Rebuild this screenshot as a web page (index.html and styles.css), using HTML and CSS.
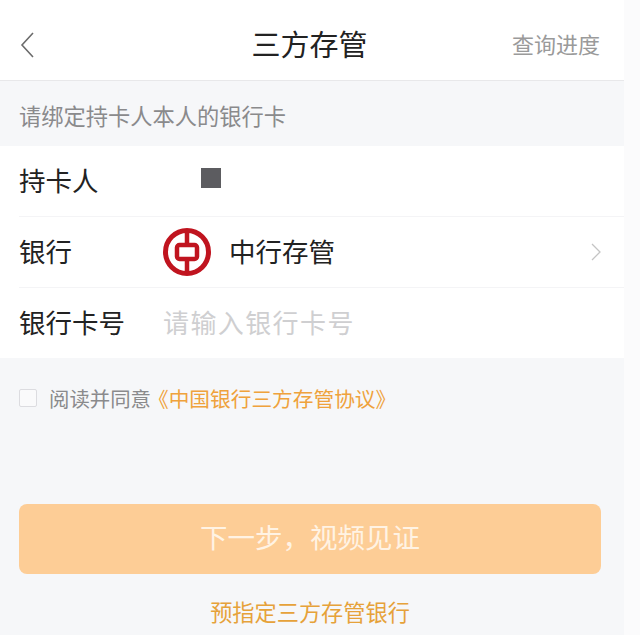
FILE: index.html
```html
<!DOCTYPE html>
<html lang="zh-CN">
<head>
    <meta charset="UTF-8">
    <title>三方存管</title>
    <link rel="stylesheet" href="styles.css">
</head>
<body>
    <div class="page">
        <header class="nav-bar">
            <svg class="back-icon" width="16" height="28" viewBox="0 0 16 28">
                <path d="M14 2 L3 14 L14 26" fill="none" stroke="#6b6b6b" stroke-width="1.6"/>
            </svg>
            <h1 class="nav-title">三方存管</h1>
            <span class="nav-link">查询进度</span>
        </header>

        <p class="hint">请绑定持卡人本人的银行卡</p>

        <div class="form">
            <div class="form-row">
                <span class="form-label">持卡人</span>
                <span class="name-mask"></span>
            </div>
            <div class="form-row">
                <span class="form-label">银行</span>
                <svg class="bank-logo" width="48" height="48" viewBox="0 0 48 48">
                    <circle cx="24" cy="24" r="21.5" fill="none" stroke="#c0141f" stroke-width="5"/>
                    <path d="M24 3 V16 M24 32 V45" stroke="#c0141f" stroke-width="4.5"/>
                    <rect x="14" y="17" width="20" height="14" rx="2.5" fill="none" stroke="#c0141f" stroke-width="4.5"/>
                </svg>
                <span class="bank-name">中行存管</span>
                <svg class="row-arrow" width="10" height="18" viewBox="0 0 10 18">
                    <path d="M1 1 L9 9 L1 17" fill="none" stroke="#c4c4c4" stroke-width="1.3"/>
                </svg>
            </div>
            <div class="form-row">
                <span class="form-label">银行卡号</span>
                <span class="placeholder">请输入银行卡号</span>
            </div>
        </div>

        <div class="agree">
            <span class="checkbox"></span>
            <span class="agree-text">阅读并同意</span>
            <span class="agree-link">《中国银行三方存管协议》</span>
        </div>

        <button class="next-btn">下一步，视频见证</button>
        <div class="pre-assign">预指定三方存管银行</div>
    </div>
</body>
</html>
```

FILE: styles.css
```css
body {
    margin: 0;
    background-color: #fbfbfc;
    font-family: "Noto Sans CJK SC", "Noto Sans", sans-serif;
    color: #222;
}

.page {
    width: 624px;
    height: 635px;
    background-color: #f6f7f9;
    overflow: hidden;
}

/* Top bar */
.nav-bar {
    height: 81px;
    box-sizing: border-box;
    padding: 6px 24px 0 19px;
    display: grid;
    grid-template-columns: 1fr auto 1fr;
    align-items: center;
    background: #fff;
    border-bottom: 1px solid #e8e8ea;
}

.back-icon {
    margin-top: 4px;
}

.nav-title {
    margin: 0;
    font-size: 29px;
    font-weight: 400;
    color: #222;
}

.nav-link {
    justify-self: end;
    font-size: 22px;
    color: #9a9a9a;
}

.hint {
    margin: 0;
    height: 65px;
    box-sizing: border-box;
    padding: 3px 0 0 19px;
    display: flex;
    align-items: center;
    font-size: 22.25px;
    color: #8a8a8c;
    line-height: 1;
}

/* Form rows */
.form {
    background: #fff;
    padding-left: 19px;
}

.form-row {
    height: 70px;
    display: flex;
    align-items: center;
    border-bottom: 1px solid #f4f4f6;
}

.form-row:last-child {
    border-bottom: none;
}

.form-label {
    width: 144px;
    margin-bottom: 4px;
    font-size: 26.5px;
    color: #222;
}

.name-mask {
    width: 20px;
    height: 20px;
    margin: -6px 0 0 38px;
    background: #5c5c60;
}

.bank-logo {
    flex-shrink: 0;
}

.bank-name {
    margin: 0 0 4px 18px;
    font-size: 26.5px;
    color: #222;
}

.row-arrow {
    margin-left: auto;
    margin-right: 23px;
}

.placeholder {
    margin-bottom: 4px;
    font-size: 26px;
    letter-spacing: 1.4px;
    color: #cfcfd1;
}

/* Agreement */
.agree {
    height: 80px;
    padding-left: 19px;
    display: flex;
    align-items: center;
}

.checkbox {
    width: 16px;
    height: 16px;
    border: 1px solid #dcdce0;
    border-radius: 2px;
    background: #fafafb;
}

.agree-text {
    margin-left: 12px;
    font-size: 20.4px;
    color: #8a8a8c;
}

.agree-link {
    margin-left: -3px;
    font-size: 20.7px;
    color: #efa23c;
}

.next-btn {
    display: block;
    width: 582px;
    height: 70px;
    margin: 66px 0 0 19px;
    padding-bottom: 8px;
    border: none;
    border-radius: 8px;
    background: #fdcd96;
    color: #fff3e4;
    font-family: inherit;
    font-size: 27.5px;
}

.pre-assign {
    margin-top: 21px;
    text-align: center;
    font-size: 22.2px;
    color: #e6a23a;
    padding-right: 4px;
}
```
